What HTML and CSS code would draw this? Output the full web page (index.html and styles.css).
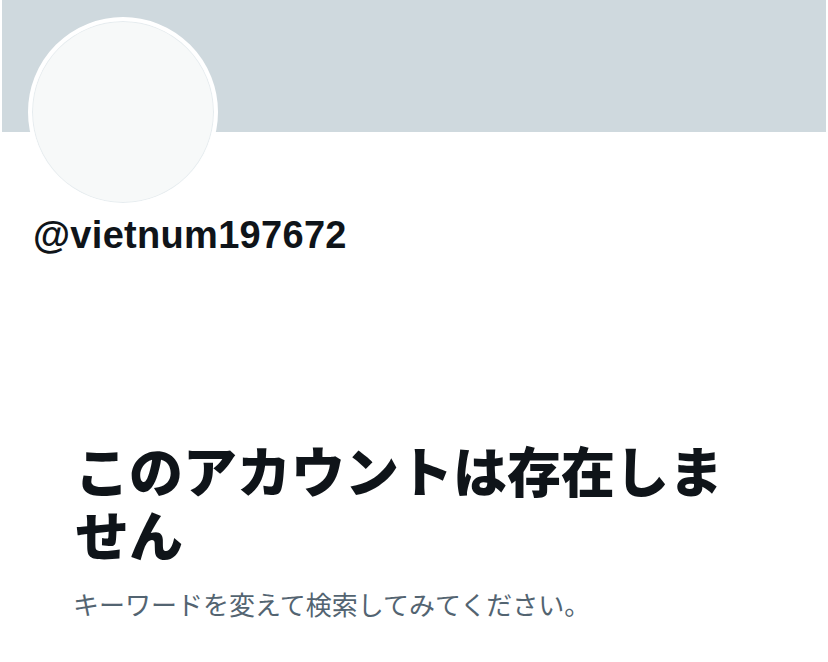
FILE: index.html
```html
<!DOCTYPE html>
<html lang="ja">
<head>
    <meta charset="UTF-8">
    <meta name="viewport" content="width=device-width, initial-scale=1.0">
    <title>@vietnum197672</title>
    <link rel="stylesheet" href="styles.css">
</head>
<body>
    <div class="profile">
        <div class="banner"></div>
        <div class="avatar"></div>
        <h1 class="handle">@vietnum197672</h1>
    </div>

    <div class="empty">
        <h2 class="empty-title">このアカウントは存在しません</h2>
        <p class="empty-text">キーワードを変えて検索してみてください。</p>
    </div>
</body>
</html>
```

FILE: styles.css
```css
body {
    margin: 0;
    padding: 0;
    background: #fff;
    color: #0f1419;
    font-family: "Liberation Sans", "Noto Sans CJK JP", sans-serif;
}
.profile {
    display: flex;
    flex-direction: column;
}
.banner {
    height: 132px;
    margin: 0 2px;
    background: #cfd9de;
}
.avatar {
    width: 182px;
    height: 182px;
    margin: -115px 0 0 28px;
    border-radius: 50%;
    border: 4px solid #fff;
    background: #f7f9f9;
    box-shadow: inset 0 0 0 1px #e6ecef;
}
.handle {
    margin: 6px 0 0 33px;
    font-size: 38px;
    line-height: 44px;
    font-weight: bold;
    letter-spacing: 0.3px;
}
.empty {
    width: 670px;
    margin: 181px 0 0 75px;
}
.empty-title {
    margin: 0;
    font-family: "Noto Sans CJK JP", sans-serif;
    font-size: 54px;
    line-height: 64px;
    font-weight: 900;
}
.empty-text {
    margin: 20px 0 0 -2px;
    font-family: "Noto Sans CJK JP", sans-serif;
    font-size: 26px;
    line-height: 36px;
    color: #536471;
}
```
